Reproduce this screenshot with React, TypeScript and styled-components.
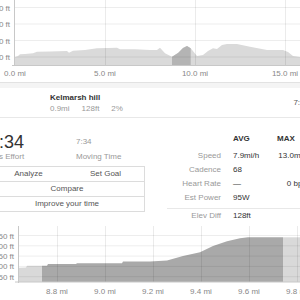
import React from "react";
import styled, { createGlobalStyle } from "styled-components";

const GlobalStyle = createGlobalStyle`
  html, body {
    margin: 0;
    padding: 0;
    background: #fff;
  }
  body {
    font-family: "Liberation Sans", Arial, sans-serif;
  }
`;

const Page = styled.div`
  width: 300px;
  height: 300px;
  overflow: hidden;
  background: #fff;
  color: #333;
  font-size: 8px;
`;

const ChartSvg = styled.svg`
  display: block;
  font-family: "Liberation Sans", Arial, sans-serif;
  font-size: 8px;
`;

const Band = styled.div`
  height: 5px;
  border-top: 1px solid #e2e2e2;
  background: #f4f4f4;
`;

const SegmentRow = styled.div`
  display: flex;
  align-items: center;
  height: 30px;
  border-bottom: 1px solid #e8e8e8;
  box-sizing: border-box;
`;

const RowEdge = styled.div`
  width: 50px;
  margin-left: -4px;
  padding-right: 4px;
  color: #999;
  padding-bottom: 4px;
`;

const SegmentInfo = styled.div`
  display: flex;
  flex-direction: column;
  line-height: 11px;
`;

const SegmentName = styled.div`
  font-weight: bold;
  color: #333;
`;

const SegmentMeta = styled.div`
  display: flex;
  gap: 12px;
  color: #999;
`;

const SegmentTime = styled.div`
  margin-left: auto;
  margin-right: -9px;
  color: #555;
`;

const EffortSection = styled.div`
  display: flex;
  height: 103px;
`;

const LeftCol = styled.div`
  width: 156px;
  margin-left: -11px;
  padding-top: 14px;
  flex-shrink: 0;
`;

const StatsLine = styled.div`
  display: flex;
  align-items: flex-end;
`;

const Stat = styled.div<{ $width?: number }>`
  width: ${(p) => (p.$width ? `${p.$width}px` : "auto")};
  display: flex;
  flex-direction: column;
`;

const BigValue = styled.div`
  font-size: 18px;
  line-height: 20px;
  color: #333;
  font-weight: 300;
`;

const SmallValue = styled.div`
  line-height: 10px;
  color: #999;
  margin-bottom: 5px;
`;

const StatLabel = styled.div`
  line-height: 10px;
  color: #999;
`;

const ButtonGroup = styled.div`
  margin-top: 4px;
  display: grid;
  grid-template-columns: 1fr 1fr;
  border: 1px solid #dcdcdc;
  border-bottom: none;
`;

const GroupButton = styled.div<{ $wide?: boolean }>`
  grid-column: ${(p) => (p.$wide ? "1 / span 2" : "auto")};
  height: 14px;
  line-height: 14px;
  text-align: center;
  color: #555;
  border-bottom: 1px solid #dcdcdc;
  & + & {
    border-left: ${(p) => (p.$wide ? "none" : "1px solid #dcdcdc")};
  }
`;

const RightCol = styled.div`
  margin-left: 22px;
  padding-top: 14px;
  flex-shrink: 0;
`;

const StatRow = styled.div<{ $divider?: boolean; $header?: boolean }>`
  display: grid;
  grid-template-columns: 66px 44px 32px;
  line-height: 14px;
  border-top: ${(p) => (p.$divider ? "1px solid #e8e8e8" : "none")};
  margin-top: ${(p) => (p.$divider ? "3px" : "0")};
  margin-bottom: ${(p) => (p.$header ? "3px" : "0")};
  font-weight: ${(p) => (p.$header ? "bold" : "normal")};
`;

const RowLabel = styled.div`
  text-align: right;
  padding-right: 12px;
  color: #999;
`;

const AvgCell = styled.div`
  color: #333;
  white-space: nowrap;
`;

const MaxCell = styled.div<{ $left?: boolean }>`
  color: #333;
  text-align: ${(p) => (p.$left ? "left" : "right")};
  white-space: nowrap;
`;

const topProfile: [number, number][] = [
  [15, 57], [18, 56], [20, 54.3], [25, 54], [33, 53.3], [37, 51.7], [50, 51.5],
  [67, 51], [69, 52.7], [73, 50.7], [85, 50], [97, 48.3], [108, 48], [117, 47.7],
  [120, 49.3], [135, 49.3], [150, 50], [157, 50], [160, 47.7], [165, 53.3],
  [172, 56.7], [178, 53], [183, 48], [187, 46], [190.7, 48.3], [197, 56],
  [203, 55], [208, 51], [213, 48.3], [217, 49], [222, 45], [227, 44], [237, 44],
  [250, 46.7], [267, 50], [283, 50], [288, 52], [293, 56], [300, 57],
];

const highlight: [number, number][] = [
  [172, 56.7], [178, 53], [183, 48], [187, 46], [190.7, 48.3],
];

const toPoly = (pts: [number, number][], base: number) => {
  const first = pts[0][0];
  const last = pts[pts.length - 1][0];
  return `${first},${base} ${pts.map((p) => p.join(",")).join(" ")} ${last},${base}`;
};

function TopChart() {
  const grid = [7.5, 24, 40.5, 57];
  const yLabels = ["400 ft", "300 ft", "200 ft", "100 ft"];
  const xs = [105, 195, 285];
  const xLabels = [
    { x: 15, t: "0.0 mi" },
    { x: 105, t: "5.0 mi" },
    { x: 195, t: "10.0 mi" },
    { x: 285, t: "15.0 mi" },
  ];
  return (
    <ChartSvg width="300" height="82" viewBox="0 0 300 82">
      <polygon points={toPoly(topProfile, 65)} fill="#dadada" />
      <polygon points={toPoly(highlight, 65)} fill="#b4b4b4" />
      {grid.map((y) => (
        <line key={y} x1="15" x2="300" y1={y} y2={y} stroke="rgba(0,0,0,0.07)" />
      ))}
      {xs.map((x) => (
        <line key={x} x1={x + 0.5} x2={x + 0.5} y1="0" y2="65" stroke="rgba(0,0,0,0.08)" />
      ))}
      <line x1="14.5" x2="14.5" y1="0" y2="66" stroke="#c8c8c8" />
      <line x1="12" x2="300" y1="65.5" y2="65.5" stroke="#c8c8c8" />
      {grid.map((y, i) => (
        <text key={y} x="10" y={y + 3} textAnchor="end" fill="#888">
          {yLabels[i]}
        </text>
      ))}
      {xLabels.map((l) => (
        <text key={l.t} x={l.x} y="76" textAnchor="middle" fill="#888">
          {l.t}
        </text>
      ))}
    </ChartSvg>
  );
}

const lightLeft: [number, number][] = [
  [18, 46.7], [26, 46.5], [27, 44.7], [42, 44.7],
];

const darkProfile: [number, number][] = [
  [42, 44.7], [47, 44.7], [48, 43], [76, 43], [77, 42.3], [122, 42.3], [123, 40.5],
  [150, 40.5], [167, 39.5], [183, 35], [200, 31.3], [213, 25], [227, 20.3],
  [240, 17.3], [248, 16.3], [283, 16.3],
];

const lightRight: [number, number][] = [
  [283, 16.3], [300, 16.3],
];

function SegmentChart() {
  const grid = [14.5, 24.8, 35.1, 45.4, 55.7];
  const yLabels = ["450 ft", "400 ft", "350 ft", "300 ft", "250 ft"];
  const xs = [
    { x: 57, t: "8.8 mi" },
    { x: 105, t: "9.0 mi" },
    { x: 153, t: "9.2 mi" },
    { x: 201, t: "9.4 mi" },
    { x: 249, t: "9.6 mi" },
    { x: 297, t: "9.8 mi" },
  ];
  return (
    <ChartSvg width="300" height="78" viewBox="0 0 300 78">
      <polygon points={toPoly(lightLeft, 61)} fill="#d9d9d9" />
      <polygon points={toPoly(darkProfile, 61)} fill="#a9a9a9" />
      <polygon points={toPoly(lightRight, 61)} fill="#d9d9d9" />
      {grid.map((y) => (
        <line key={y} x1="18" x2="300" y1={y} y2={y} stroke="rgba(0,0,0,0.07)" />
      ))}
      {xs.map((l) => (
        <line key={l.x} x1={l.x + 0.5} x2={l.x + 0.5} y1="5" y2="61" stroke="rgba(0,0,0,0.08)" />
      ))}
      <line x1="18.5" x2="18.5" y1="5" y2="62" stroke="#c8c8c8" />
      <line x1="15" x2="300" y1="61" y2="61" stroke="#c8c8c8" />
      {grid.map((y, i) => (
        <text key={y} x="14" y={y + 3} textAnchor="end" fill="#888">
          {yLabels[i]}
        </text>
      ))}
      {xs.map((l) => (
        <text key={l.t} x={l.x} y="73" textAnchor="middle" fill="#888">
          {l.t}
        </text>
      ))}
    </ChartSvg>
  );
}

export default function App() {
  return (
    <>
      <GlobalStyle />
      <Page>
        <TopChart />
        <Band />
        <SegmentRow>
          <RowEdge>›</RowEdge>
          <SegmentInfo>
            <SegmentName>Kelmarsh hill</SegmentName>
            <SegmentMeta>
              <span>0.9mi</span>
              <span>128ft</span>
              <span>2%</span>
            </SegmentMeta>
          </SegmentInfo>
          <SegmentTime>7:34</SegmentTime>
        </SegmentRow>
        <EffortSection>
          <LeftCol>
            <StatsLine>
              <Stat $width={87}>
                <BigValue>7:34</BigValue>
                <StatLabel>Jo's Effort</StatLabel>
              </Stat>
              <Stat>
                <SmallValue>7:34</SmallValue>
                <StatLabel>Moving Time</StatLabel>
              </Stat>
            </StatsLine>
            <ButtonGroup>
              <GroupButton>Analyze</GroupButton>
              <GroupButton>Set Goal</GroupButton>
              <GroupButton $wide>Compare</GroupButton>
              <GroupButton $wide>Improve your time</GroupButton>
            </ButtonGroup>
          </LeftCol>
          <RightCol>
            <StatRow $header>
              <RowLabel />
              <AvgCell>AVG</AvgCell>
              <MaxCell $left>MAX</MaxCell>
            </StatRow>
            <StatRow>
              <RowLabel>Speed</RowLabel>
              <AvgCell>7.9mi/h</AvgCell>
              <MaxCell>13.0mi/h</MaxCell>
            </StatRow>
            <StatRow>
              <RowLabel>Cadence</RowLabel>
              <AvgCell>68</AvgCell>
              <MaxCell />
            </StatRow>
            <StatRow>
              <RowLabel>Heart Rate</RowLabel>
              <AvgCell>—</AvgCell>
              <MaxCell>0 bpm</MaxCell>
            </StatRow>
            <StatRow>
              <RowLabel>Est Power</RowLabel>
              <AvgCell>95W</AvgCell>
              <MaxCell />
            </StatRow>
            <StatRow $divider>
              <RowLabel>Elev Diff</RowLabel>
              <AvgCell>128ft</AvgCell>
              <MaxCell />
            </StatRow>
          </RightCol>
        </EffortSection>
        <SegmentChart />
      </Page>
    </>
  );
}
